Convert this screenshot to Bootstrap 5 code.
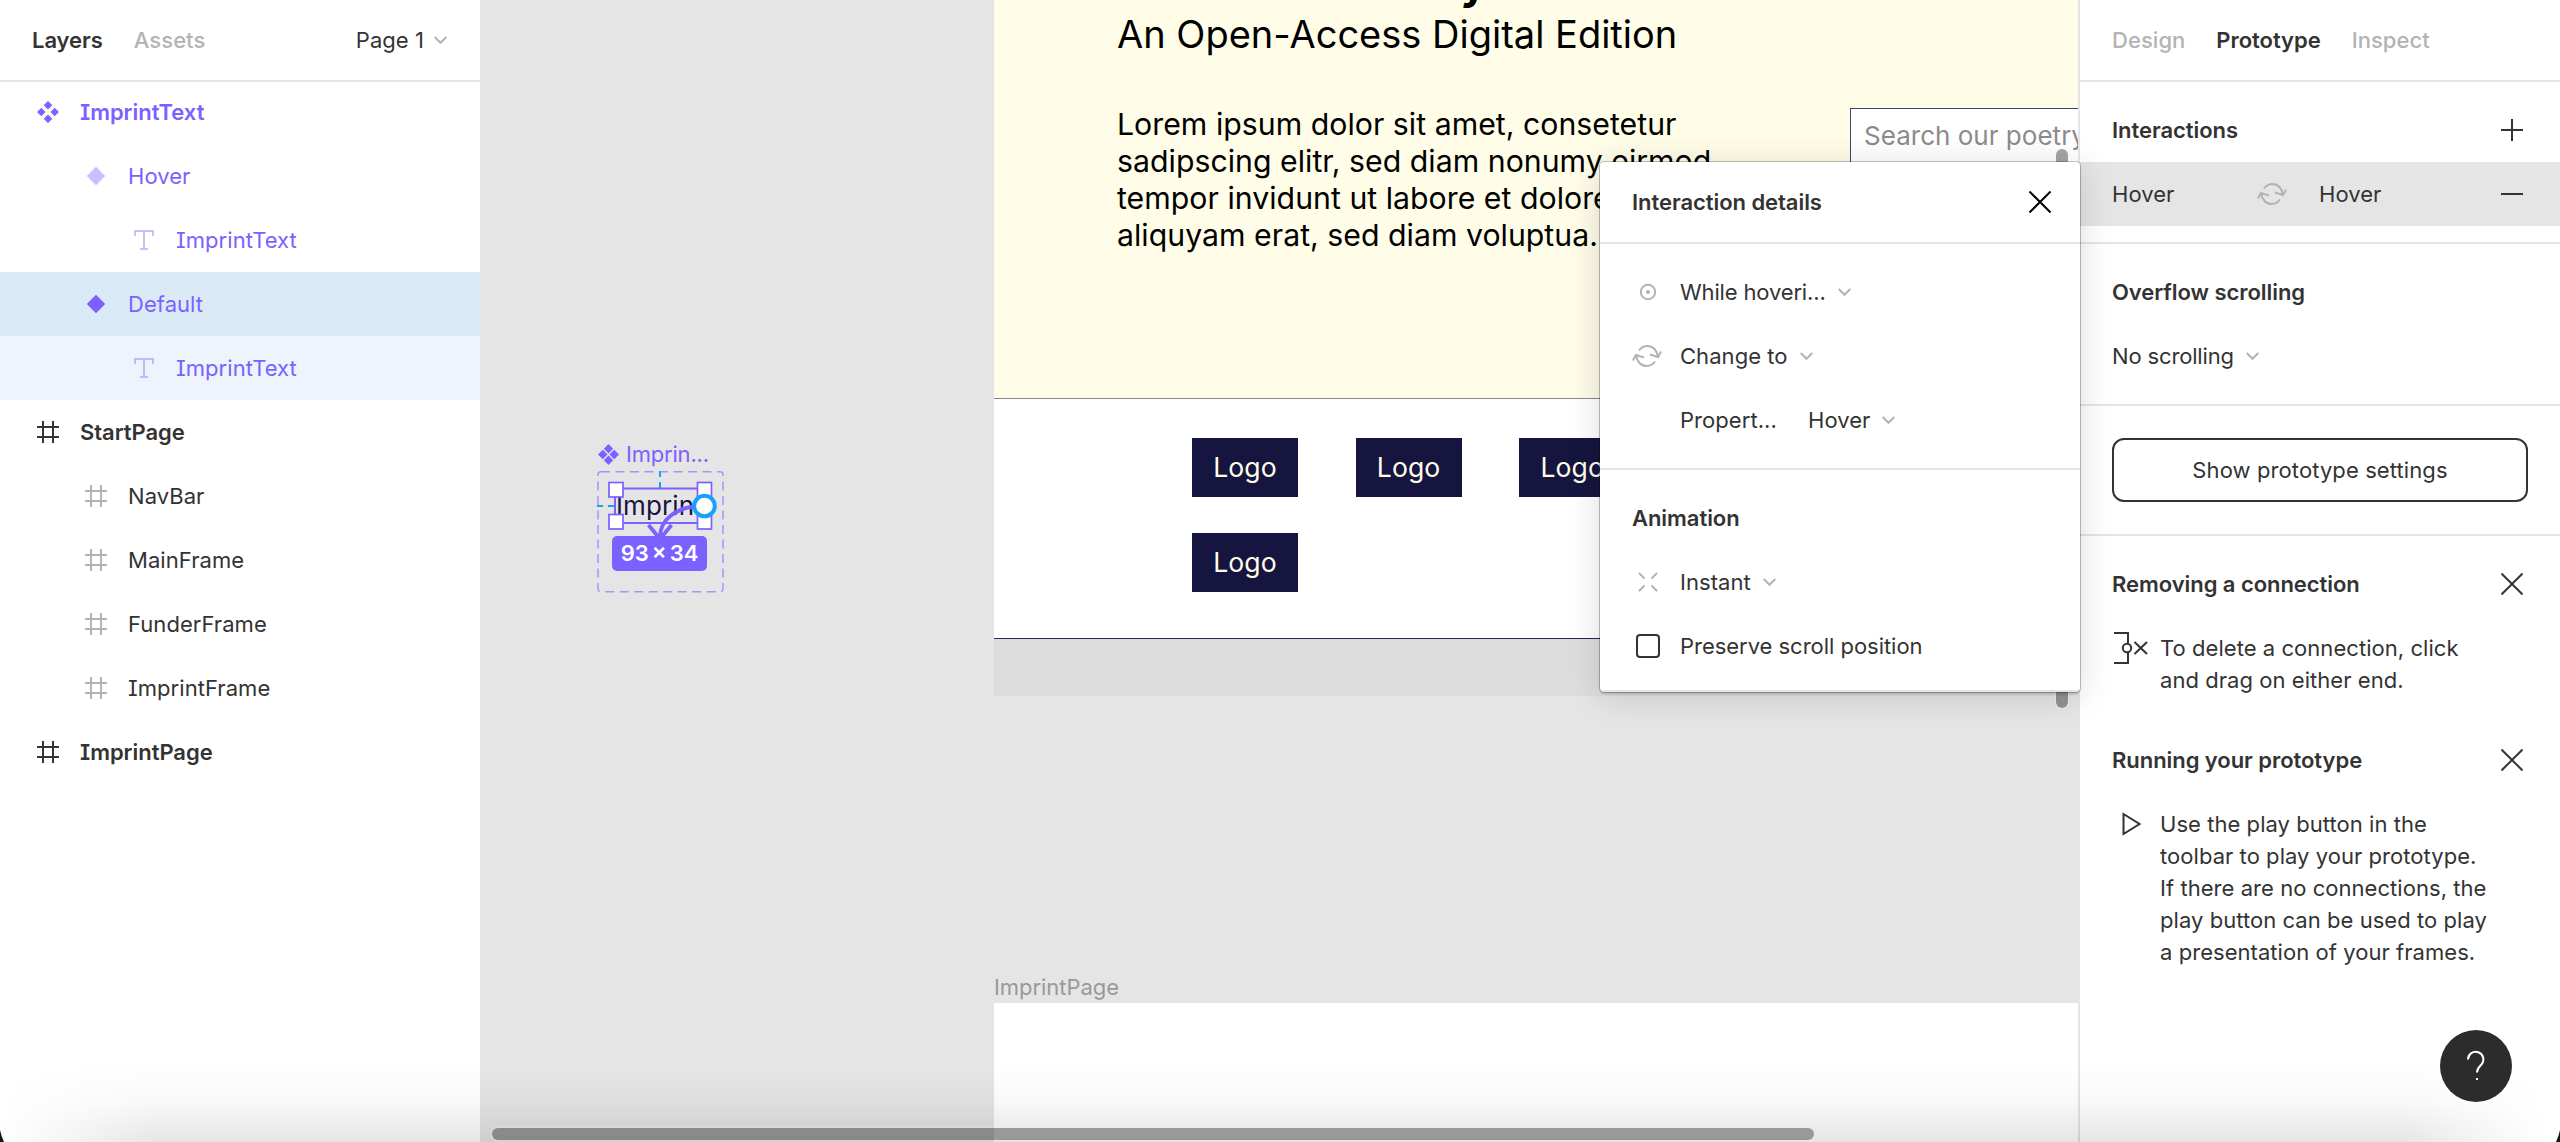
<!DOCTYPE html>
<html lang="en">
<head>
<meta charset="utf-8">
<meta name="viewport" content="width=device-width, initial-scale=1">
<title>Design editor</title>
<link href="https://cdn.jsdelivr.net/npm/bootstrap@5.3.0/dist/css/bootstrap.min.css" rel="stylesheet">
<script src="https://cdn.jsdelivr.net/npm/bootstrap@5.3.0/dist/js/bootstrap.bundle.min.js"></script>
<style>
  :root { --ink: #333; --muted: #b3b3b3; --line: #e5e5e5; --violet: #7b61ff; --blue: #18a0fb; --navy: #151540; }
  body { font-family: Inter, "Liberation Sans", sans-serif; font-size: 22px; line-height: 32px; letter-spacing: .05px; color: var(--ink); background: #e5e5e5; }
  svg { display: block; fill: none; flex: none; overflow: visible; }
  .strong { font-weight: 600; letter-spacing: -.05px; }
  .faded { color: var(--muted); font-weight: 500; }
  .side { width: 480px; background: #fff; }
  .side-right { width: 482px; border-left: 2px solid var(--line); }
  .bar-top { height: 82px; border-bottom: 2px solid var(--line); padding: 0 33px 0 32px; gap: 31px; }
  .chev { width: 13px; height: 8px; stroke: var(--muted); stroke-width: 2; margin-left: 12px; }
  .tight { letter-spacing: -.15px; }

  /* layer tree */
  .tree { margin-top: -2px; font-feature-settings: "cv08"; }
  .layer { height: 64px; padding-left: 32px; }
  .layer .ico { width: 32px; margin-right: 16px; display: flex; justify-content: center; }
  .lv1 { padding-left: 80px; } .lv2 { padding-left: 128px; }
  .violet { color: var(--violet); }
  .picked { background: #daebf7; } .picked-child { background: #edf4fb; }
  .dim { opacity: .4; }
  .grey { color: var(--muted); }

  /* canvas */
  .artboard { left: 514px; top: 0; width: 1084px; height: 696px; background: #ddd; }
  .hero { display: flow-root; height: 398px; background: #fffde8; padding-left: 123px; color: #000; }
  .hero-title { width: 370px; line-height: 32px; font-size: 44px; text-align: right; margin-top: -33px; white-space: nowrap; }
  .hero-sub { font-size: 38px; line-height: 46px; letter-spacing: 0; margin-top: 12px; }
  .hero-text { font-size: 30.25px; line-height: 37px; letter-spacing: .02px; margin-top: 49px; white-space: nowrap; }
  .search-box { left: 856px; top: 108px; width: 400px; height: 60px; background: #fff; border: 1.5px solid #42426a; padding-left: 13px; font-size: 26px; line-height: 54px; color: #8c8c8c; letter-spacing: .02px; white-space: nowrap; }
  .funders { height: 241px; background: #fff; border-top: 1px solid #85859e; border-bottom: 1px solid #232350; padding: 39px 0 0 198px; display: grid; grid-template-columns: repeat(3, 106px); grid-auto-rows: 59px; column-gap: 57.6px; row-gap: 36px; }
  .logo-tile { background: var(--navy); color: #fffde8; font-size: 26.6px; line-height: 59px; text-align: center; }
  .artboard2-name { left: 514px; top: 971px; color: #999; letter-spacing: -.05px; }
  .artboard2 { left: 514px; top: 1003px; width: 1084px; height: 139px; background: #fff; }
  .thumb-v { left: 1576px; top: 149px; width: 12px; height: 559px; border-radius: 6px; background: #000; opacity: .35; box-shadow: 0 0 0 1px #fff; }
  .thumb-h { left: 12px; top: 1128px; width: 1322px; height: 12px; border-radius: 6px; background: rgba(0,0,0,.34); box-shadow: 0 0 0 2px rgba(255,255,255,.25); }

  /* component node */
  .node-box { left: 117px; top: 471px; }
  .node-name { left: 118px; top: 438px; gap: 7px; white-space: nowrap; letter-spacing: -.2px; }
  .node-text { left: 136px; font-size: 26px; color: var(--navy); letter-spacing: .1px; }
  .node-size { left: 132px; top: 536px; width: 95px; height: 35px; border-radius: 5px; background: var(--violet); color: #fff; font-size: 22px; font-weight: 600; line-height: 35px; letter-spacing: 0; text-align: center; word-spacing: -2.5px; white-space: nowrap; }

  /* dialog */
  .dialog { left: 1600px; top: 162px; width: 480px; background: #fff; border-radius: 4px; border-bottom: 2px solid var(--line); box-shadow: 0 0 0 1px rgba(0,0,0,.22), 0 2px 2px rgba(0,0,0,.15), 0 4px 34px rgba(0,0,0,.15); z-index: 5; }
  .dialog-head { height: 82px; padding: 0 29px 0 32px; }
  .rowx { height: 64px; padding-left: 32px; }
  .rowx .ico { width: 48px; }
  .prop { width: 128px; }
  .rule { border-bottom: 2px solid var(--line); }
  .tick { width: 24px; height: 24px; border: 2px solid var(--ink); border-radius: 4px; margin-left: 4px; }

  /* right panel */
  .hit { background: #e5e5e5; padding: 0 37px 0 32px; height: 64px; }
  .hit-from { width: 145px; }
  .set-wrap { padding: 32px; }
  .btn-set { height: 64px; border: 2px solid var(--ink); border-radius: 12px; font-size: 22px; color: var(--ink); letter-spacing: .1px; }
  .tip-head { padding: 0 37px 0 32px; height: 32px; }
  .tip { padding-left: 32px; }
  .tip .ico { width: 48px; height: 32px; flex: none; }
  .help { left: 2440px; top: 1030px; width: 72px; height: 72px; border-radius: 50%; background: #2c2c2c; z-index: 6; }
  .shade { left: 0; right: 0; bottom: 0; height: 76px; background: linear-gradient(to bottom, rgba(0,0,0,0), rgba(0,0,0,.03) 50%, rgba(0,0,0,.1)); -webkit-mask-image: linear-gradient(to right, transparent, #000 160px, #000 2400px, transparent 2545px); mask-image: linear-gradient(to right, transparent, #000 160px, #000 2400px, transparent 2545px); z-index: 4; pointer-events: none; }
  .corner { bottom: 0; width: 4px; height: 12px; z-index: 7; background: #0a1c18; }
  .corner-r { right: 0; clip-path: polygon(100% 0, 100% 100%, 0 100%, 60% 50%); }
  .corner-l { left: 0; clip-path: polygon(0 0, 0 100%, 100% 100%, 40% 50%); }
</style>
</head>
<body class="vh-100 overflow-hidden position-relative">

<svg width="0" height="0" class="position-absolute">
  <symbol id="hash" viewBox="0 0 22 22"><path d="M6 0v22M16 0v22M0 6h22M0 16h22" stroke="currentColor" stroke-width="2"/></symbol>
  <symbol id="comp" viewBox="0 0 22 22"><path d="M11 0l4.300 4.200L11 8.500 6.700 4.200zM11 13.500l4.300 4.300L11 22l-4.300-4.200zM4.300 6.700L8.500 11l-4.200 4.300L0 11zM17.700 6.700L22 11l-4.300 4.300L13.500 11z" fill="currentColor"/></symbol>
  <symbol id="comp-lg" viewBox="0 0 22 22"><path d="M11 0l4.900 5L11 10 6.100 5zM11 12l4.900 5L11 22l-4.900-5zM5 6.100L10 11l-5 4.900L0 11zM17 6.100L22 11l-5 4.900L12 11z" fill="currentColor"/></symbol>
  <symbol id="rhomb" viewBox="0 0 20 20"><path d="M10 .8L19.200 10 10 19.200.8 10z" fill="currentColor"/></symbol>
  <symbol id="tee" viewBox="0 0 20 20"><path d="M1 6V1h18v5M10 1v18M6 19h8" stroke="currentColor" stroke-width="2"/></symbol>
  <symbol id="chev" viewBox="0 0 13 8"><path d="M.7 1l5.800 5.800L12.300 1"/></symbol>
  <symbol id="sync" viewBox="0 0 30 24"><path d="M7 6.500C9.500 3 12 2 15.300 2 21 2 25.200 6.500 26 13M18 10.500l8 2.500 3.200-5.500M23 17.500c-2.500 3.500-5 4.500-8.300 4.500C9 22 4.800 17.500 4 11M12 13.500L4 11 .8 16.500" stroke="#b3b3b3" stroke-width="2"/></symbol>
  <symbol id="ex" viewBox="0 0 22 22"><path d="M.5.500l21 21M21.500.500l-21 21" stroke="currentColor" stroke-width="2"/></symbol>
</svg>

<div class="d-flex h-100">
  <!-- Layers panel -->
  <aside class="side flex-shrink-0">
    <div class="bar-top d-flex align-items-center">
      <span class="strong">Layers</span>
      <span class="faded">Assets</span>
      <span class="ms-auto d-flex align-items-center">Page 1<svg class="chev" style="margin-left:10px"><use href="#chev"/></svg></span>
    </div>
    <div class="tree">
      <div class="layer d-flex align-items-center violet strong"><span class="ico"><svg width="22" height="22"><use href="#comp"/></svg></span>ImprintText</div>
      <div class="layer lv1 d-flex align-items-center violet"><span class="ico"><svg class="dim" width="20" height="20"><use href="#rhomb"/></svg></span>Hover</div>
      <div class="layer lv2 d-flex align-items-center violet"><span class="ico"><svg class="dim" width="20" height="20"><use href="#tee"/></svg></span>ImprintText</div>
      <div class="layer lv1 d-flex align-items-center violet picked"><span class="ico"><svg width="20" height="20"><use href="#rhomb"/></svg></span>Default</div>
      <div class="layer lv2 d-flex align-items-center violet picked-child"><span class="ico"><svg class="dim" width="20" height="20"><use href="#tee"/></svg></span>ImprintText</div>
      <div class="layer d-flex align-items-center strong"><span class="ico"><svg width="22" height="22"><use href="#hash"/></svg></span>StartPage</div>
      <div class="layer lv1 d-flex align-items-center"><span class="ico grey"><svg width="22" height="22"><use href="#hash"/></svg></span>NavBar</div>
      <div class="layer lv1 d-flex align-items-center"><span class="ico grey"><svg width="22" height="22"><use href="#hash"/></svg></span>MainFrame</div>
      <div class="layer lv1 d-flex align-items-center"><span class="ico grey"><svg width="22" height="22"><use href="#hash"/></svg></span>FunderFrame</div>
      <div class="layer lv1 d-flex align-items-center"><span class="ico grey"><svg width="22" height="22"><use href="#hash"/></svg></span>ImprintFrame</div>
      <div class="layer d-flex align-items-center strong"><span class="ico"><svg width="22" height="22"><use href="#hash"/></svg></span>ImprintPage</div>
    </div>
  </aside>

  <!-- Canvas -->
  <main class="flex-grow-1 position-relative overflow-hidden">
    <div class="node-name position-absolute d-flex align-items-center violet"><svg width="21" height="21"><use href="#comp-lg"/></svg>Imprin...</div>
    <div class="node-text position-absolute" style="top:490px">Imprint</div>
    <div class="node-text position-absolute" style="top:540px">Imprint</div>
    <svg class="node-box position-absolute" width="127" height="121">
      <rect x="1" y=".7" width="125" height="120" rx="3" stroke="#a594fa" stroke-width="1.500" stroke-dasharray="9 5.500"/>
      <path d="M63 0v18M0 35h18" stroke="#18a0fb" stroke-width="2" stroke-dasharray="6 5"/>
      <rect x="18" y="17.500" width="89" height="34.500" stroke="#7b61ff" stroke-width="2"/>
      <g fill="#fff" stroke="#7b61ff" stroke-width="1.700"><rect x="12" y="11.500" width="14" height="14.500"/><rect x="12" y="43.500" width="14" height="14.500"/><rect x="100.500" y="11.500" width="14" height="14.500"/><rect x="100.500" y="43.500" width="14" height="14.500"/></g>
      <path d="M96 35.500C80 38 64 47 63 65M51.500 54L63 68l11.500-14" stroke="#7b61ff" stroke-width="3.800"/>
      <circle cx="107.500" cy="35" r="10.300" fill="#fff" stroke="#18a0fb" stroke-width="4"/>
    </svg>
    <div class="node-size position-absolute">93 × 34</div>

    <section class="artboard position-absolute">
      <div class="hero">
        <div class="hero-title fw-bold">Modern Poetry</div>
        <div class="hero-sub">An Open-Access Digital Edition</div>
        <div class="hero-text">Lorem ipsum dolor sit amet, consetetur<br>sadipscing elitr, sed diam nonumy eirmod<br>tempor invidunt ut labore et dolore<br>aliquyam erat, sed diam voluptua.</div>
      </div>
      <div class="funders">
        <div class="logo-tile">Logo</div><div class="logo-tile">Logo</div><div class="logo-tile">Logo</div><div class="logo-tile">Logo</div>
      </div>
      <div class="search-box position-absolute">Search our poetry</div>
    </section>
    <div class="artboard2-name position-absolute">ImprintPage</div>
    <section class="artboard2 position-absolute"></section>
    <div class="thumb-v position-absolute"></div>
    <div class="thumb-h position-absolute"></div>
  </main>

  <!-- Prototype panel -->
  <aside class="side side-right flex-shrink-0">
    <div class="bar-top d-flex align-items-center">
      <span class="faded">Design</span>
      <span class="strong">Prototype</span>
      <span class="faded">Inspect</span>
    </div>
    <div class="rule pb-3">
      <div class="tip-head strong d-flex align-items-center justify-content-between mt-4 pt-2" style="height:40px">Interactions
        <svg width="22" height="22"><path d="M11 0v22M0 11h22" stroke="#333" stroke-width="2"/></svg></div>
      <div class="hit d-flex align-items-center mt-3"><span class="hit-from">Hover</span><svg width="30" height="24"><use href="#sync"/></svg><span class="ms-4 ps-2">Hover</span>
        <svg class="ms-auto" width="22" height="2"><path d="M0 1h22" stroke="#333" stroke-width="2"/></svg></div>
    </div>
    <div class="rule py-3">
      <div class="rowx strong d-flex align-items-center">Overflow scrolling</div>
      <div class="rowx d-flex align-items-center tight">No scrolling<svg class="chev"><use href="#chev"/></svg></div>
    </div>
    <div class="rule set-wrap">
      <button class="btn btn-set w-100 d-flex align-items-center justify-content-center" type="button">Show prototype settings</button>
    </div>
    <div class="pt-3 mt-3">
      <div class="tip-head strong d-flex align-items-center justify-content-between">Removing a connection<svg width="22" height="22"><use href="#ex"/></svg></div>
      <div class="tip d-flex mt-3 pt-3">
        <span class="ico"><svg width="36" height="32"><path d="M2 1h14v10M16 21v10H2M22.500 10L35 22M35 10L22.500 22" stroke="#333" stroke-width="2"/><circle cx="15" cy="16" r="4.200" stroke="#333" stroke-width="2"/></svg></span>
        <span>To delete a connection, click<br>and drag on either end.</span>
      </div>
    </div>
    <div class="pt-4 mt-4">
      <div class="tip-head strong d-flex align-items-center justify-content-between">Running your prototype<svg width="22" height="22"><use href="#ex"/></svg></div>
      <div class="tip d-flex mt-3 pt-3">
        <span class="ico"><svg width="36" height="32"><path d="M11.500 6v20L27.500 16z" stroke="#333" stroke-width="2"/></svg></span>
        <span>Use the play button in the<br>toolbar to play your prototype.<br>If there are no connections, the<br>play button can be used to play<br>a presentation of your frames.</span>
      </div>
    </div>
  </aside>
</div>

<!-- Interaction dialog -->
<div class="dialog position-absolute">
  <div class="dialog-head rule d-flex align-items-center justify-content-between strong">Interaction details<svg width="22" height="22" color="#000"><use href="#ex"/></svg></div>
  <div class="rule py-3">
    <div class="rowx d-flex align-items-center tight"><span class="ico"><svg width="32" height="20"><circle cx="16" cy="10" r="7.200" stroke="#b3b3b3" stroke-width="2"/><circle cx="16" cy="10" r="2" fill="#b3b3b3"/></svg></span>While hoveri...<svg class="chev"><use href="#chev"/></svg></div>
    <div class="rowx d-flex align-items-center"><span class="ico"><svg width="30" height="24"><use href="#sync"/></svg></span>Change to<svg class="chev"><use href="#chev"/></svg></div>
    <div class="rowx d-flex align-items-center"><span class="ico"></span><span class="prop">Propert...</span>Hover<svg class="chev"><use href="#chev"/></svg></div>
  </div>
  <div class="pt-3 pb-2 mb-1">
    <div class="rowx strong d-flex align-items-center">Animation</div>
    <div class="rowx d-flex align-items-center"><span class="ico"><svg width="32" height="20"><path d="M7 1l5.500 5.500M25 1l-5.500 5.500M7 19l5.500-5.500M25 19l-5.500-5.500" stroke="#b3b3b3" stroke-width="2"/></svg></span>Instant<svg class="chev"><use href="#chev"/></svg></div>
    <div class="rowx d-flex align-items-center" style="letter-spacing:-.03px"><span class="ico"><span class="tick d-block"></span></span>Preserve scroll position</div>
  </div>
</div>

<div class="shade position-absolute"></div>
<div class="help position-absolute d-flex align-items-center justify-content-center">
  <svg width="20" height="30"><path d="M2 8.500a7.700 7.700 0 1 1 13.500 5c-2.500 2.500-4.500 4-4.500 8" stroke="#fff" stroke-width="2"/><path d="M10 27h2v2h-2z" fill="#fff"/></svg>
</div>
<div class="corner corner-l position-absolute"></div>
<div class="corner corner-r position-absolute"></div>
</body>
</html>
